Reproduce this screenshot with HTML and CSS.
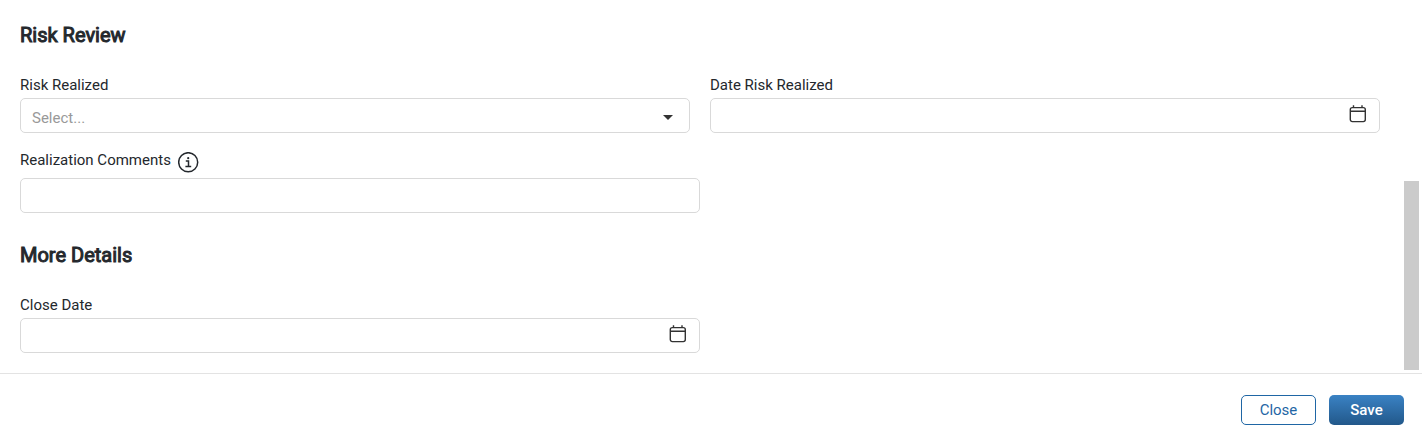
FILE: index.html
```html
<!DOCTYPE html>
<html lang="en">
<head>
  <meta charset="UTF-8" />
  <meta name="viewport" content="width=device-width, initial-scale=1.0"/>
  <title>Risk Review</title>
  <link rel="stylesheet" href="styles.css">
</head>
<body>
<form class="risk-form">
  <div class="form-body">
    <main class="form-content">
      <section class="form-section">
        <h2>Risk Review</h2>
        <div class="form-row">
          <div class="field">
            <label for="riskRealized">Risk Realized</label>
            <div class="control">
              <select id="riskRealized">
                <option value="">Select...</option>
                <option value="yes">Yes</option>
                <option value="no">No</option>
              </select>
              <svg class="arrow" width="10" height="5" viewBox="0 0 10 5"><path d="M0 0h10L5 5z" fill="#333"/></svg>
            </div>
          </div>
          <div class="field">
            <label for="dateRealized">Date Risk Realized</label>
            <div class="control">
              <input type="text" id="dateRealized">
              <button type="button" class="date-button" aria-label="Choose date">
                <svg width="18" height="18" viewBox="0 0 18 18" fill="none" stroke="#333" stroke-width="1.4"><rect x="1.3" y="2.6" width="15" height="14" rx="2"/><path d="M1.3 6.3h15M4.5 .3v2.3M13 .3v2.3"/></svg>
              </button>
            </div>
          </div>
        </div>
        <div class="field half">
          <div class="label-row">
            <label for="comments">Realization Comments</label>
            <svg class="info" width="21" height="21" viewBox="0 0 21 21" fill="none" stroke="#24282d"><circle cx="10.2" cy="10.2" r="9.5" stroke-width="1.5"/><path d="M7.8 9h2.7v5.6M7.4 14.6h5.8" stroke-width="1.5"/><circle cx="10.2" cy="6.2" r="1.1" fill="#24282d" stroke="none"/></svg>
          </div>
          <div class="control">
            <input type="text" id="comments">
          </div>
        </div>
      </section>

      <section class="form-section">
        <h2>More Details</h2>
        <div class="field half">
          <label for="closeDate">Close Date</label>
          <div class="control">
            <input type="text" id="closeDate">
            <button type="button" class="date-button" aria-label="Choose date">
              <svg width="18" height="18" viewBox="0 0 18 18" fill="none" stroke="#333" stroke-width="1.4"><rect x="1.3" y="2.6" width="15" height="14" rx="2"/><path d="M1.3 6.3h15M4.5 .3v2.3M13 .3v2.3"/></svg>
            </button>
          </div>
        </div>
      </section>
    </main>
    <div class="scroll-rail"><div class="scroll-thumb"></div></div>
  </div>

  <footer>
    <button type="button" class="btn btn-close">Close</button>
    <button type="submit" class="btn btn-save">Save</button>
  </footer>
</form>
</body>
</html>
```

FILE: styles.css
```css
* { box-sizing: border-box; }
body { margin: 0; background: #fff; color: #24282d; font-family: Roboto, Arial, sans-serif; font-size: 15px; line-height: 20px; }
h2 { margin: 0 0 25px; font-size: 20px; line-height: 30px; font-weight: 400; -webkit-text-stroke: 1px #24282d; }
label { display: block; }
input, select, button { font: inherit; }

.form-body { display: flex; border-bottom: 1px solid #e3e3e3; }
.form-content { flex: 1; padding: 20px 24px 20px 20px; }
.form-section + .form-section { margin-top: 27px; }
.form-row { display: grid; grid-template-columns: 1fr 1fr; gap: 20px; margin-bottom: 17px; }
.half { width: 50%; }
.label-row { display: flex; gap: 7px; height: 25px; }
.info { margin-top: 2px; }

.control { position: relative; display: flex; height: 35px; margin-top: 3px; border: 1px solid #d9d9d9; border-radius: 5px; }
.control input, .control select { flex: 1; min-width: 0; padding: 0 11px; border: 0; border-radius: 5px; background: transparent; color: inherit; }
.control select { appearance: none; padding-top: 4px; color: #999; }
.arrow { position: absolute; right: 16px; top: 16px; pointer-events: none; }
.date-button { display: flex; padding: 6px 12px 0 0; border: 0; background: none; cursor: pointer; }

.scroll-rail { display: flex; align-items: flex-end; width: 18px; padding: 0 3px 3px 0; }
.scroll-thumb { width: 100%; height: 51%; background: #cbcbcb; }

footer { display: flex; justify-content: flex-end; gap: 13px; padding: 21px 18px 17px; }
.btn { width: 75px; height: 30px; padding: 0; border: 1px solid #1f66a5; border-radius: 5px; cursor: pointer; }
.btn-close { background: #fff; color: #1f66a5; }
.btn-save { border: 0; background: linear-gradient(#3a82c4, #22588a); color: #fff; font-weight: 500; }
```
